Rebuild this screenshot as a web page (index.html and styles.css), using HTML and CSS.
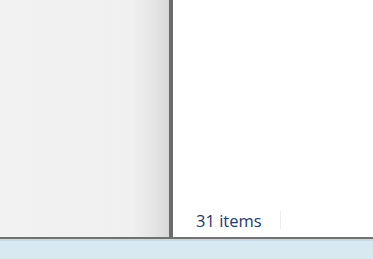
FILE: index.html
```html
<!DOCTYPE html>
<html lang="en">
<head>
    <meta charset="UTF-8">
    <meta name="viewport" content="width=device-width, initial-scale=1.0">
    <title>Explorer</title>
    <link rel="stylesheet" href="styles.css">
</head>
<body>
    <main class="window">
        <section class="nav-pane"></section>
        <div class="splitter"></div>
        <section class="content">
            <div class="files"></div>
            <footer class="status">
                <span class="count">31 items</span>
                <span class="divider"></span>
            </footer>
        </section>
    </main>
    <div class="frame-edge"></div>
    <div class="taskbar"></div>
</body>
</html>
```

FILE: styles.css
```css
html, body {
    margin: 0;
    height: 100%;
}

body {
    display: flex;
    flex-direction: column;
    font-family: "Open Sans", "Noto Sans", sans-serif;
    overflow: hidden;
}

.window {
    display: flex;
    height: 237px;
    flex: none;
}

.nav-pane {
    width: 169px;
    background: linear-gradient(90deg, #f2f2f2 0%, #f0f0f0 78%, #e4e4e4 92%, #d6d6d6 100%);
}

.splitter {
    width: 4px;
    background: #6b6b6b;
}

.content {
    flex: 1;
    display: flex;
    flex-direction: column;
    background: #ffffff;
}

.files {
    flex: 1;
}

.status {
    display: flex;
    align-items: center;
    height: 26px;
    padding-bottom: 4px;
    padding-left: 23px;
}

.count {
    font-size: 16.5px;
    color: #1b3a74;
}

.divider {
    width: 1px;
    height: 18px;
    margin-left: 18px;
    background: #ececec;
}

.frame-edge {
    height: 2px;
    background: #727272;
}

.taskbar {
    flex: 1;
    border-top: 2px solid #c6dbe5;
    background: #d8e9f1;
}
```
